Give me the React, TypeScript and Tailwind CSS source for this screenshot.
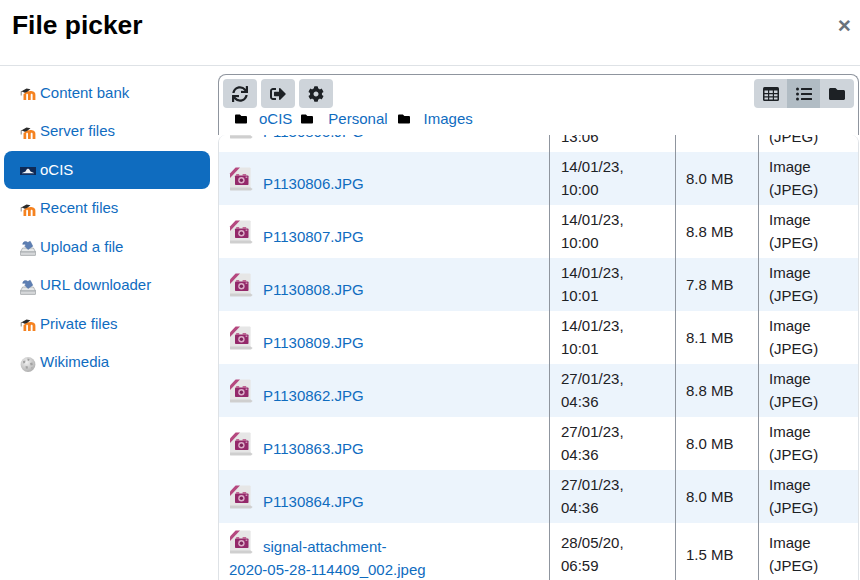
import { FaSync, FaSignOutAlt, FaCog, FaListUl, FaFolder } from 'react-icons/fa';

type Repo = { label: string; icon: 'moodle' | 'ocis' | 'upload' | 'wiki'; active?: boolean };

const repos: Repo[] = [
  { label: 'Content bank', icon: 'moodle' },
  { label: 'Server files', icon: 'moodle' },
  { label: 'oCIS', icon: 'ocis', active: true },
  { label: 'Recent files', icon: 'moodle' },
  { label: 'Upload a file', icon: 'upload' },
  { label: 'URL downloader', icon: 'upload' },
  { label: 'Private files', icon: 'moodle' },
  { label: 'Wikimedia', icon: 'wiki' },
];

const files = [
  { name: 'P1130805.JPG', date: ['14/01/23,', '13:06'], size: '8.2 MB' },
  { name: 'P1130806.JPG', date: ['14/01/23,', '10:00'], size: '8.0 MB' },
  { name: 'P1130807.JPG', date: ['14/01/23,', '10:00'], size: '8.8 MB' },
  { name: 'P1130808.JPG', date: ['14/01/23,', '10:01'], size: '7.8 MB' },
  { name: 'P1130809.JPG', date: ['14/01/23,', '10:01'], size: '8.1 MB' },
  { name: 'P1130862.JPG', date: ['27/01/23,', '04:36'], size: '8.8 MB' },
  { name: 'P1130863.JPG', date: ['27/01/23,', '04:36'], size: '8.0 MB' },
  { name: 'P1130864.JPG', date: ['27/01/23,', '04:36'], size: '8.0 MB' },
];

function MoodleIcon() {
  return (
    <svg width="16" height="16" viewBox="0 0 16 16" className="shrink-0">
      <g transform="translate(0,-1)">
        <path d="M5 8.2 C5 6.8 6.4 6.3 8 6.3 L9.6 6.3 C11 5.9 12.2 6 13.2 6.6 C14.6 7.2 15.4 8.2 15.4 9.8 L15.4 15 L12.6 15 L12.6 10 C12.6 9 12.2 8.7 11.6 8.7 C11 8.7 10.7 9.1 10.7 10 L10.7 15 L8 15 L8 10 C8 9 7.6 8.7 7.1 8.7 C6.5 8.7 6.2 9.1 6.2 10 L6.2 15 L3.5 15 L3.5 9.6 C3.5 9 3.9 8.5 5 8.2 Z" fill="#f58220" />
        <path d="M0.3 7 L6.5 3.6 L10.5 4.2 L7 7 L4.6 7.7 L2.6 6.8 Z" fill="#2b2b2b" />
        <path d="M1.2 7 L1.2 10.5" stroke="#555" strokeWidth="0.7" fill="none" />
      </g>
    </svg>
  );
}

function OcisIcon() {
  return (
    <svg width="16" height="16" viewBox="0 0 16 16" className="shrink-0">
      <rect x="0" y="4" width="16" height="8" fill="#0f2a56" />
      <path d="M2 10 L5.5 8.6 L6.6 6.6 L8 5.6 L9.4 6.6 L10.5 8.6 L14 10 Z" fill="#f2f4f7" />
      <rect x="2" y="10.4" width="12" height="0.7" fill="#6d83a6" />
    </svg>
  );
}

function UploadIcon() {
  return (
    <svg width="16" height="16" viewBox="0 0 16 16" className="shrink-0">
      <path d="M2.6 8 L13.4 8 L15.6 12 L0.4 12 Z" fill="#e6e8e9" stroke="#8c9094" strokeWidth="0.6" />
      <rect x="0.4" y="12" width="15.2" height="3.4" rx="0.5" fill="#d6d8da" stroke="#8c9094" strokeWidth="0.6" />
      <path d="M2.8 3.4 C3.6 1.2 6.4 1 8 2.6 L9.2 1.6 L10.4 1.4 L12.8 6.2 L8 9.6 L4.6 6 L6 5.2 C5.2 4.2 4 4 2.8 4.6 Z" fill="#5d7fb3" stroke="#3f5f94" strokeWidth="0.4" />
    </svg>
  );
}

function WikiIcon() {
  return (
    <svg width="16" height="16" viewBox="0 0 16 16" className="shrink-0">
      <defs>
        <radialGradient id="globe" cx="0.4" cy="0.35" r="0.75">
          <stop offset="0" stopColor="#f2f2f2" />
          <stop offset="1" stopColor="#a8a8a8" />
        </radialGradient>
      </defs>
      <circle cx="8" cy="8.5" r="7.4" fill="url(#globe)" />
      <path d="M3 5 L5.5 4.6 L5 7 L3.2 7.5 Z M7.4 2.6 L9.6 3 L9 5 L7.6 4.6 Z M10 7 L12.4 6.6 L12.8 9 L10.6 9.6 Z M5.6 10 L8 10.4 L7.6 12.8 L5.8 12.4 Z M11 11.4 L12.6 11.2 L12 13 Z" fill="#a2a2a2" />
    </svg>
  );
}

function GridIcon() {
  return (
    <svg width="16" height="14" viewBox="0 0 16 14">
      <rect x="0" y="0" width="16" height="14" rx="1.5" fill="#1d2125" />
      <path d="M1.5 3.5 H5 V6 H1.5 Z M6.2 3.5 H9.8 V6 H6.2 Z M11 3.5 H14.5 V6 H11 Z M1.5 7.2 H5 V9.2 H1.5 Z M6.2 7.2 H9.8 V9.2 H6.2 Z M11 7.2 H14.5 V9.2 H11 Z M1.5 10.4 H5 V12.5 H1.5 Z M6.2 10.4 H9.8 V12.5 H6.2 Z M11 10.4 H14.5 V12.5 H11 Z" fill="#ced4da" />
    </svg>
  );
}

function RepoIcon({ icon }: { icon: Repo['icon'] }) {
  if (icon === 'moodle') return <MoodleIcon />;
  if (icon === 'ocis') return <OcisIcon />;
  if (icon === 'upload') return <UploadIcon />;
  return <WikiIcon />;
}

function ImageFileIcon() {
  return (
    <svg width="24" height="24" viewBox="0 0 24 24" className="inline-block align-[-2px] mr-[10px]">
      <path d="M1 10 L10 0.6 L21 0.6 L21.6 1.2 L21.6 23 L1.4 23 L1 22.5 Z" fill="#e6e6e6" />
      <path d="M1 20.5 L21.6 20.5 L23.6 22 L22 23.4 L1.4 23.4 L1 23 Z" fill="#cfcfcf" />
      <path d="M1 6.4 L6.6 0.4 L11 0.4 L1 11 Z" fill="#b5487f" />
      <rect x="6" y="8.4" width="13.5" height="9.6" rx="0.8" fill="#94296a" />
      <rect x="7.2" y="7.2" width="3" height="1.4" fill="#b5487f" />
      <rect x="13.6" y="7.2" width="3.6" height="1.4" fill="#b5487f" />
      <circle cx="12.4" cy="13.2" r="3.2" fill="#dcaec9" />
      <circle cx="12.4" cy="13.2" r="1.7" fill="#7d2359" />
      <rect x="16.6" y="9.6" width="1.7" height="1.2" fill="#dcaec9" />
    </svg>
  );
}

function ToolButton({ children }: { children: React.ReactNode }) {
  return (
    <button className="w-[34px] h-[29px] rounded bg-[#ced4da] flex items-center justify-center text-[#1d2125] text-[16px]">
      {children}
    </button>
  );
}

function FileRow({ name, date, size, index, nameClass }: { name: React.ReactNode; date: string[]; size: string; index: number; nameClass: string }) {
  const bg = index % 2 === 0 ? 'bg-white' : 'bg-[#ecf4fc]';
  return (
    <div className={`grid grid-cols-[331px_126px_83px_99px] min-h-[53px] ${bg}`}>
      <div className="flex items-center border-r border-[#8f959e] pl-[10px] pr-2">
        <div className={nameClass}>
          <ImageFileIcon />
          <a className="text-[#0f6cbf]">{name}</a>
        </div>
      </div>
      <div className="flex flex-col justify-center border-r border-[#8f959e] pl-[11px]">
        {date.map((d) => (
          <span key={d}>{d}</span>
        ))}
      </div>
      <div className="flex items-center border-r border-[#8f959e] pl-[10px] pt-px">{size}</div>
      <div className="flex flex-col justify-center pl-[10px]">
        <span>Image</span>
        <span>(JPEG)</span>
      </div>
    </div>
  );
}

export default function App() {
  return (
    <div className="h-[580px] w-[860px] overflow-hidden bg-white text-[15px] leading-[22.5px] text-[#1d2125] font-['Liberation_Sans',Arial,sans-serif]">
      <div className="h-[66px] border-b border-[#dee2e6] flex items-start justify-between pl-3 pr-[9px]">
        <h1 className="text-[26.4px] font-bold leading-[30px] mt-[10px] text-black">File picker</h1>
        <span className="text-[22.5px] font-bold leading-[26px] mt-[13px] text-[#6a737b]">×</span>
      </div>

      <div className="flex pt-2">
        <nav className="w-[206px] ml-1 shrink-0 mt-[-0.25px]">
          {repos.map((r) => (
            <div
              key={r.label}
              className={`flex items-center gap-1 pl-4 py-2 rounded-lg ${r.active ? 'bg-[#0f6cbf] text-white' : 'text-[#0f6cbf]'}`}
            >
              <span className="mt-[2px]">
                <RepoIcon icon={r.icon} />
              </span>
              <span>{r.label}</span>
            </div>
          ))}
        </nav>

        <main className="ml-2 w-[641px] shrink-0">
          <div className="h-[61px] border-t border-x border-[#8f959e] rounded-t-lg px-1 pt-1">
            <div className="flex justify-between">
              <div className="flex gap-1">
                <ToolButton><FaSync /></ToolButton>
                <ToolButton><FaSignOutAlt /></ToolButton>
                <ToolButton><FaCog /></ToolButton>
              </div>
              <div className="flex rounded overflow-hidden bg-[#ced4da] text-[#1d2125] text-[16px]">
                <span className="w-[33px] h-[29px] flex items-center justify-center"><GridIcon /></span>
                <span className="w-[33px] h-[29px] flex items-center justify-center bg-[#b1bcc4]"><FaListUl /></span>
                <span className="w-[34px] h-[29px] flex items-center justify-center"><FaFolder /></span>
              </div>
            </div>
            <div className="flex items-center h-[22px] pl-[12px] text-[#0f6cbf]">
              <FaFolder className="text-[12px] text-black" />
              <span className="ml-3">oCIS</span>
              <FaFolder className="text-[12px] text-black ml-[9px]" />
              <span className="ml-[15px]">Personal</span>
              <FaFolder className="text-[12px] text-black ml-[10px]" />
              <span className="ml-[14px]">Images</span>
            </div>
          </div>

          <div className="h-[446px] overflow-hidden border-x border-[#dee2e6] rounded-t-lg">
            <div className="mt-[-36px]">
              {files.map((f, i) => (
                <FileRow key={f.name} name={f.name} date={f.date} size={f.size} index={i} nameClass={i === 0 ? 'pt-[8px]' : 'pt-[5px]'} />
              ))}
              <FileRow
                name={
                  <>
                    signal-attachment-
                    <span className="whitespace-nowrap">2020-05-28-114409_002.jpeg</span>
                  </>
                }
                date={['28/05/20,', '06:59']}
                size="1.5 MB"
                index={8}
                nameClass="pt-[7px] pb-[5px]"
              />
            </div>
          </div>
        </main>
      </div>
    </div>
  );
}
